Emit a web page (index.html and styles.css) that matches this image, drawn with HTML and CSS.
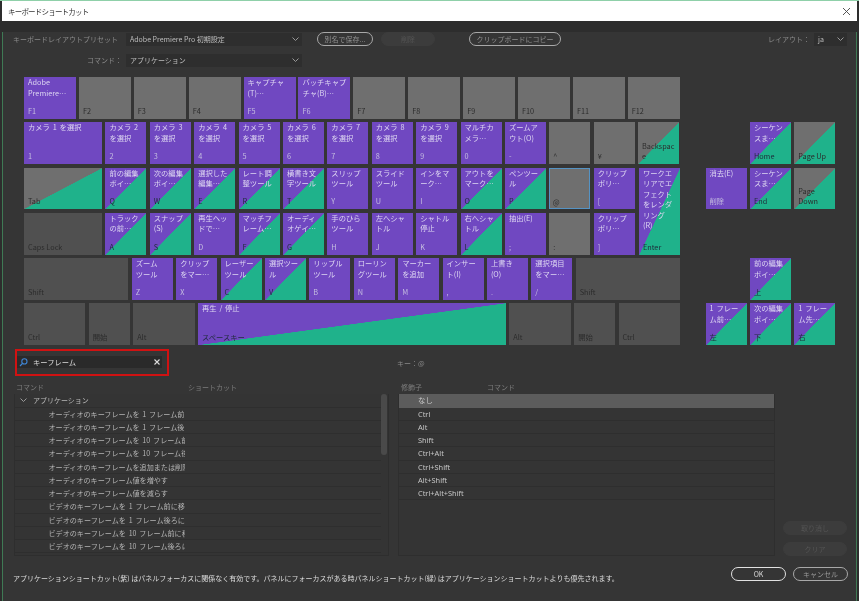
FILE: index.html
```html
<!DOCTYPE html>
<html lang="ja">
<head>
<meta charset="utf-8">
<title>キーボードショートカット</title>
<link rel="stylesheet" href="styles.css">
</head>
<body>
<div class="window">
  <header class="titlebar">
    <span class="title">キーボードショートカット</span>
    <svg class="close" width="9" height="9" viewBox="0 0 9 9"><path d="M1 1L8 8M8 1L1 8" stroke="#444" stroke-width="0.9" fill="none"/></svg>
  </header>
  <main class="dialog">
    <div class="toolbar">
      <span class="label label-left">キーボードレイアウトプリセット</span>
      <div class="combo combo-wide"><span>Adobe Premiere Pro 初期設定</span><svg width="7" height="4" viewBox="0 0 7 4"><path d="M.5.5L3.5 3.5L6.5.5" stroke="#999" fill="none"/></svg></div>
      <button class="pill pill-save">別名で保存...</button>
      <button class="pill pill-off pill-del">削除</button>
      <button class="pill pill-copy">クリップボードにコピー</button>
      <span class="label layout-label">レイアウト：</span>
      <div class="combo combo-small"><span>ja</span><svg width="7" height="4" viewBox="0 0 7 4"><path d="M.5.5L3.5 3.5L6.5.5" stroke="#999" fill="none"/></svg></div>
    </div>
    <div class="toolbar toolbar-second">
      <span class="label">コマンド：</span>
      <div class="combo combo-wide"><span>アプリケーション</span><svg width="7" height="4" viewBox="0 0 7 4"><path d="M.5.5L3.5 3.5L6.5.5" stroke="#999" fill="none"/></svg></div>
    </div>

    <section class="keyboard">
      <div class="main-keys">
        <div class="row row-f">
          <div class="key purple"><span class="cmd">Adobe Premiere…</span><span class="name">F1</span></div>
          <div class="key gray"><span class="name">F2</span></div>
          <div class="key gray"><span class="name">F3</span></div>
          <div class="key gray"><span class="name">F4</span></div>
          <div class="key purple"><span class="cmd">キャプチャ(T)…</span><span class="name">F5</span></div>
          <div class="key purple"><span class="cmd">バッチキャプチャ(B)…</span><span class="name">F6</span></div>
          <div class="key gray"><span class="name">F7</span></div>
          <div class="key gray"><span class="name">F8</span></div>
          <div class="key gray"><span class="name">F9</span></div>
          <div class="key gray"><span class="name">F10</span></div>
          <div class="key gray"><span class="name">F11</span></div>
          <div class="key gray"><span class="name">F12</span></div>
        </div>
        <div class="row">
          <div class="key purple wide"><span class="cmd">カメラ 1 を選択</span><span class="name">1</span></div>
          <div class="key purple"><span class="cmd">カメラ 2 を選択</span><span class="name">2</span></div>
          <div class="key purple"><span class="cmd">カメラ 3 を選択</span><span class="name">3</span></div>
          <div class="key purple"><span class="cmd">カメラ 4 を選択</span><span class="name">4</span></div>
          <div class="key purple"><span class="cmd">カメラ 5 を選択</span><span class="name">5</span></div>
          <div class="key purple"><span class="cmd">カメラ 6 を選択</span><span class="name">6</span></div>
          <div class="key purple"><span class="cmd">カメラ 7 を選択</span><span class="name">7</span></div>
          <div class="key purple"><span class="cmd">カメラ 8 を選択</span><span class="name">8</span></div>
          <div class="key purple"><span class="cmd">カメラ 9 を選択</span><span class="name">9</span></div>
          <div class="key purple"><span class="cmd">マルチカメラ…</span><span class="name">0</span></div>
          <div class="key purple"><span class="cmd">ズームアウト(O)</span><span class="name">-</span></div>
          <div class="key gray"><span class="name">^</span></div>
          <div class="key gray"><span class="name">¥</span></div>
          <div class="key gray-green"><span class="name">Backspace</span></div>
        </div>
        <div class="row-pair">
          <div class="pair-rows">
            <div class="row">
              <div class="key gray-green wide"><span class="name">Tab</span></div>
              <div class="key both"><span class="cmd">前の編集ポイ…</span><span class="name">Q</span></div>
              <div class="key both"><span class="cmd">次の編集ポイ…</span><span class="name">W</span></div>
              <div class="key both"><span class="cmd">選択した編集…</span><span class="name">E</span></div>
              <div class="key both"><span class="cmd">レート調整ツール</span><span class="name">R</span></div>
              <div class="key both"><span class="cmd">横書き文字ツール</span><span class="name">T</span></div>
              <div class="key purple"><span class="cmd">スリップツール</span><span class="name">Y</span></div>
              <div class="key purple"><span class="cmd">スライドツール</span><span class="name">U</span></div>
              <div class="key purple"><span class="cmd">インをマーク…</span><span class="name">I</span></div>
              <div class="key both"><span class="cmd">アウトをマーク…</span><span class="name">O</span></div>
              <div class="key both"><span class="cmd">ペンツール</span><span class="name">P</span></div>
              <div class="key gray focus"><span class="name">@</span></div>
              <div class="key purple"><span class="cmd">クリップボリ…</span><span class="name">[</span></div>
            </div>
            <div class="row">
              <div class="key dark wide"><span class="name">Caps Lock</span></div>
              <div class="key both"><span class="cmd">トラックの前…</span><span class="name">A</span></div>
              <div class="key both"><span class="cmd">スナップ(S)</span><span class="name">S</span></div>
              <div class="key purple"><span class="cmd">再生ヘッドで…</span><span class="name">D</span></div>
              <div class="key both"><span class="cmd">マッチフレーム…</span><span class="name">F</span></div>
              <div class="key both"><span class="cmd">オーディオゲイ…</span><span class="name">G</span></div>
              <div class="key purple"><span class="cmd">手のひらツール</span><span class="name">H</span></div>
              <div class="key purple"><span class="cmd">左へシャトル</span><span class="name">J</span></div>
              <div class="key purple"><span class="cmd">シャトル停止</span><span class="name">K</span></div>
              <div class="key both"><span class="cmd">右へシャトル</span><span class="name">L</span></div>
              <div class="key purple"><span class="cmd">抽出(E)</span><span class="name">;</span></div>
              <div class="key gray"><span class="name">:</span></div>
              <div class="key purple"><span class="cmd">クリップボリ…</span><span class="name">]</span></div>
            </div>
          </div>
          <div class="key both enter"><span class="cmd">ワークエリアでエフェクトをレンダリング<br>(R)</span><span class="name">Enter</span></div>
        </div>
        <div class="row">
          <div class="key dark shift"><span class="name">Shift</span></div>
          <div class="key purple"><span class="cmd">ズーム<br>ツール</span><span class="name">Z</span></div>
          <div class="key purple"><span class="cmd">クリップをマー…</span><span class="name">X</span></div>
          <div class="key both"><span class="cmd">レーザー<br>ツール</span><span class="name">C</span></div>
          <div class="key both"><span class="cmd">選択ツー<br>ル</span><span class="name">V</span></div>
          <div class="key purple"><span class="cmd">リップル<br>ツール</span><span class="name">B</span></div>
          <div class="key purple"><span class="cmd">ローリン<br>グツール</span><span class="name">N</span></div>
          <div class="key purple"><span class="cmd">マーカー<br>を追加</span><span class="name">M</span></div>
          <div class="key purple"><span class="cmd">インサー<br>ト(I)</span><span class="name">,</span></div>
          <div class="key purple"><span class="cmd">上書き<br>(O)</span><span class="name">.</span></div>
          <div class="key purple"><span class="cmd">選択項目<br>をマー…</span><span class="name">/</span></div>
          <div class="key dark shift"><span class="name">Shift</span></div>
        </div>
        <div class="row">
          <div class="key dark mod"><span class="name">Ctrl</span></div>
          <div class="key dark"><span class="name">開始</span></div>
          <div class="key dark mod"><span class="name">Alt</span></div>
          <div class="key both space"><span class="cmd">再生 / 停止</span><span class="name">スペースキー</span></div>
          <div class="key dark mod"><span class="name">Alt</span></div>
          <div class="key dark"><span class="name">開始</span></div>
          <div class="key dark mod"><span class="name">Ctrl</span></div>
        </div>
      </div>
      <div class="nav-keys">
        <div class="nav-gap"></div>
        <div class="key both"><span class="cmd">シーケンスま…</span><span class="name">Home</span></div>
        <div class="key gray-green"><span class="name">Page Up</span></div>
        <div class="key purple"><span class="cmd">消去(E)</span><span class="name">削除</span></div>
        <div class="key both"><span class="cmd">シーケンスま…</span><span class="name">End</span></div>
        <div class="key gray-green"><span class="name">Page Down</span></div>
        <div class="nav-gap"></div><div class="nav-gap"></div><div class="nav-gap"></div>
        <div class="nav-gap"></div>
        <div class="key both"><span class="cmd">前の編集ポイ…</span><span class="name">上</span></div>
        <div class="nav-gap"></div>
        <div class="key both"><span class="cmd">1 フレー<br>ム前…</span><span class="name">左</span></div>
        <div class="key both"><span class="cmd">次の編集ポイ…</span><span class="name">下</span></div>
        <div class="key both"><span class="cmd">1 フレー<br>ム先…</span><span class="name">右</span></div>
      </div>
    </section>

    <div class="search-row">
      <div class="search-highlight">
        <div class="search-box">
          <svg class="search-icon" width="9" height="9" viewBox="0 0 9 9"><circle cx="5.4" cy="3.4" r="2.6" stroke="#3f86d6" stroke-width="1.1" fill="none"/><path d="M3.5 5.4L1 8" stroke="#3f86d6" stroke-width="1.3" fill="none"/></svg>
          <span class="search-text">キーフレーム</span>
          <svg class="search-clear" width="6" height="6" viewBox="0 0 6 6"><path d="M.5.5L5.5 5.5M5.5.5L.5 5.5" stroke="#ddd" stroke-width="1.1" fill="none"/></svg>
        </div>
      </div>
      <span class="key-readout">キー：@</span>
    </div>

    <div class="tables">
      <div class="panel panel-left">
        <div class="heads"><span class="head-a">コマンド</span><span>ショートカット</span></div>
        <div class="list">
          <div class="rows">
            <div class="rw group"><svg width="7" height="4" viewBox="0 0 7 4"><path d="M.5.5L3.5 3.5L6.5.5" stroke="#999" fill="none"/></svg><span>アプリケーション</span></div>
            <div class="rw item"><span>オーディオのキーフレームを 1 フレーム前に移動</span></div>
            <div class="rw item"><span>オーディオのキーフレームを 1 フレーム後ろに移動</span></div>
            <div class="rw item"><span>オーディオのキーフレームを 10 フレーム前に移動</span></div>
            <div class="rw item"><span>オーディオのキーフレームを 10 フレーム後ろに移動</span></div>
            <div class="rw item"><span>オーディオのキーフレームを追加または削除</span></div>
            <div class="rw item"><span>オーディオのキーフレーム値を増やす</span></div>
            <div class="rw item"><span>オーディオのキーフレーム値を減らす</span></div>
            <div class="rw item"><span>ビデオのキーフレームを 1 フレーム前に移動</span></div>
            <div class="rw item"><span>ビデオのキーフレームを 1 フレーム後ろに移動</span></div>
            <div class="rw item"><span>ビデオのキーフレームを 10 フレーム前に移動</span></div>
            <div class="rw item"><span>ビデオのキーフレームを 10 フレーム後ろに移動</span></div>
          </div>
          <div class="scrolltrack"><div class="thumb"></div></div>
        </div>
      </div>
      <div class="panel panel-right">
        <div class="heads"><span class="head-b">修飾子</span><span>コマンド</span></div>
        <div class="list">
          <div class="rows">
            <div class="rw mod-row selected">なし</div>
            <div class="rw mod-row">Ctrl</div>
            <div class="rw mod-row">Alt</div>
            <div class="rw mod-row">Shift</div>
            <div class="rw mod-row">Ctrl+Alt</div>
            <div class="rw mod-row">Ctrl+Shift</div>
            <div class="rw mod-row">Alt+Shift</div>
            <div class="rw mod-row">Ctrl+Alt+Shift</div>
          </div>
        </div>
      </div>
      <div class="side-actions">
        <button class="pill pill-off pill-side">取り消し</button>
        <button class="pill pill-off pill-side">クリア</button>
      </div>
    </div>

    <footer class="footer">
      <p class="note">アプリケーションショートカット(紫) はパネルフォーカスに関係なく有効です。パネルにフォーカスがある時パネルショートカット(緑) はアプリケーションショートカットよりも優先されます。</p>
      <button class="pill pill-ok">OK</button>
      <button class="pill pill-cancel">キャンセル</button>
    </footer>
  </main>
</div>
</body>
</html>
```
FILE: styles.css
```css
* { box-sizing: border-box; }
html, body { margin: 0; padding: 0; }
body {
  width: 859px;
  height: 601px;
  overflow: hidden;
  background: #2d2d2d;
  font-family: "Noto Sans CJK JP", "Noto Sans", sans-serif;
  font-size: 7px;
  color: #c9c9c9;
}
.window {
  width: 859px;
  height: 601px;
  padding: 0 2px 1px;
  border-top: 1px solid #8fd0a9;
  filter: blur(0.3px);
}
.titlebar {
  height: 20px;
  background: #fff;
  display: flex;
  align-items: center;
  justify-content: space-between;
  padding: 0 6px;
  color: #333;
}
.title { font-size: 7.5px; letter-spacing: -0.8px; }
.dialog {
  height: 579px;
  background: #353535;
  border-left: 1px solid #3f7a55;
  border-right: 1px solid #3f7a55;
  border-bottom: 1px solid #3f7a55;
}
.toolbar {
  display: flex;
  align-items: center;
  height: 14px;
  margin-top: 11px;
  padding: 0 9px 0 10px;
}
.toolbar-second { margin-top: 7px; }
.label {
  width: 109px;
  flex: none;
  text-align: right;
  color: #8a8a8a;
  margin-right: 4px;
  white-space: nowrap;
}
.label-left { text-align: left; }
.layout-label { width: 42px; margin-left: auto; text-align: left; }
.combo {
  height: 13px;
  display: flex;
  align-items: center;
  justify-content: space-between;
  background: #2e2e2e;
  padding: 0 3px 0 4px;
  color: #bdbdbd;
  flex: none;
}
.combo-wide { width: 176px; }
.combo-small { width: 33px; }
.pill {
  font: inherit;
  border-radius: 8px;
  background: transparent;
  padding: 0;
  height: 14px;
  border: 1px solid #a8a8a8;
  color: #8f8f8f;
  flex: none;
}
.pill-save { width: 56px; margin-left: 15px; }
.pill-off { background: #3c3c3c; border-color: #3c3c3c; color: #555; }
.pill-del { width: 54px; margin-left: 8px; }
.pill-copy { width: 92px; margin-left: 34px; }

.keyboard {
  display: flex;
  gap: 25.5px;
  margin-top: 10px;
  padding-left: 21px;
}
.main-keys {
  width: 656px;
  display: flex;
  flex-direction: column;
  gap: 3.4px;
  flex: none;
}
.row { display: flex; gap: 3.4px; height: 41.9px; }
.row-f { gap: 2.9px; }
.row-f .key { width: 52px; }
.row-pair { display: flex; gap: 3.4px; }
.pair-rows { display: flex; flex-direction: column; gap: 3.4px; width: 611.6px; flex: none; }
.key {
  width: 41px;
  flex: none;
  display: flex;
  flex-direction: column;
  justify-content: space-between;
  padding: 0 3.5px 2.5px 4px;
  line-height: 10.5px;
  font-size: 7.3px;
  overflow: hidden;
  color: #ded7f2;
}
.cmd { display: block; word-spacing: 1.2px; }
.name { display: block; margin-top: auto; overflow-wrap: anywhere; color: #c4bce0; }
.wide { width: 78px; }
.shift { width: 104.4px; }
.mod { width: 61.4px; }
.space { width: 308px; }
.enter { width: 41px; }
.purple { background: #7048c1; }
.gray { background: #6f6f6f; }
.dark { background: #505050; }
.gray .name, .dark .name, .gray-green .name { color: #2c2c2c; }
.both { background: linear-gradient(to bottom right, #7048c1 50%, #1fb28b 50.5%); }
.both .name { color: #1e2b3a; }
.gray-green { background: linear-gradient(to bottom right, #6f6f6f 50%, #1fb28b 50.5%); }
.focus { border: 1.5px solid #5593c4; padding: 0 2px 1px 2.5px; }

.nav-keys {
  display: grid;
  grid-template-columns: repeat(3, 41px);
  grid-auto-rows: 41.9px;
  gap: 3.4px;
  margin-top: 45.3px;
  height: 222px;
}

.search-row {
  display: flex;
  align-items: flex-start;
  margin-top: 4px;
  padding-left: 12px;
}
.search-highlight {
  width: 154px;
  height: 27px;
  border: 2px solid #d01212;
  padding: 5px 5px 0 0;
}
.search-box {
  height: 12px;
  background: #2a2a2a;
  display: flex;
  align-items: center;
  padding: 0 2px 0 2px;
  color: #dcdcdc;
}
.search-text { margin-left: 5px; font-size: 7.3px; }
.search-clear { margin-left: auto; }
.key-readout { margin: 9px 0 0 228px; color: #8a8a8a; line-height: 10px; }

.tables {
  display: flex;
  align-items: flex-end;
  margin-top: 6px;
  padding-left: 11px;
}
.panel-left { width: 375px; margin-right: 9px; }
.panel-right { width: 377px; margin-right: 8px; }
.heads {
  height: 12px;
  display: flex;
  color: #7c7c7c;
  line-height: 11px;
}
.head-a { width: 174px; padding-left: 2px; }
.head-b { width: 89px; padding-left: 3px; }
.list {
  height: 162px;
  display: flex;
  border: 1px solid #2e2e2e;
  border-top: none;
  background: #343434;
}
.rows { flex: 1; min-width: 0; }
.rw {
  height: 13.25px;
  line-height: 12.5px;
  border-bottom: 1px solid #2e2e2e;
  white-space: nowrap;
}
.group { display: flex; align-items: center; padding-left: 5px; color: #b9b9b9; }
.group span { margin-left: 6px; }
.item { padding-left: 33.5px; }
.item span { display: block; width: 136.5px; overflow: hidden; color: #b5b5b5; font-size: 7.1px; word-spacing: 1.2px; }
.scrolltrack { width: 7px; flex: none; }
.thumb { width: 6px; height: 61px; background: #4a4a4a; border-radius: 3px; }
.mod-row { padding-left: 19px; font-family: "Noto Sans", "Noto Sans CJK JP", sans-serif; font-size: 7.4px; color: #c6c6c6; }
.selected { background: #5c5c5c; border-bottom-color: #5c5c5c; }
.side-actions { display: flex; flex-direction: column; gap: 7px; width: 64px; }
.pill-side { width: 64px; }

.footer {
  display: flex;
  align-items: flex-start;
  margin-top: 11px;
  padding-left: 10px;
}
.note {
  margin: 6px 0 0;
  width: 718px;
  color: #dcdcdc;
  font-size: 7px;
  line-height: 10px;
  white-space: nowrap;
}
.pill-ok { width: 55px; border: 1.5px solid #e2e2e2; color: #d8d8d8; }
.pill-cancel { width: 55px; margin-left: 7px; color: #9a9a9a; }
```
